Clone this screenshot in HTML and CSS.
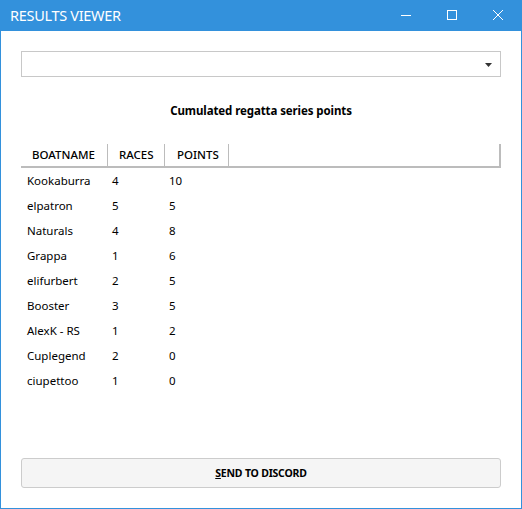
FILE: index.html
```html
<!DOCTYPE html>
<html>
<head>
<meta charset="utf-8">
<link rel="stylesheet" href="styles.css">
</head>
<body>
<div class="window">
  <div class="titlebar">
    <div class="title">RESULTS VIEWER</div>
    <div class="controls">
      <div class="ctl"><svg width="10" height="10" viewBox="0 0 10 10"><path d="M0 5.5H10" stroke="#fff" stroke-width="1"/></svg></div>
      <div class="ctl"><svg width="10" height="10" viewBox="0 0 10 10"><rect x="0.5" y="0.5" width="9" height="9" fill="none" stroke="#fff" stroke-width="1"/></svg></div>
      <div class="ctl"><svg width="10" height="10" viewBox="0 0 10 10"><path d="M0 0L10 10M10 0L0 10" stroke="#fff" stroke-width="1"/></svg></div>
    </div>
  </div>
  <div class="content">
    <div class="combo"><svg class="arrow" width="7" height="4" viewBox="0 0 7 4"><path d="M0 0H7L3.5 4Z" fill="#333"/></svg></div>
    <div class="heading">Cumulated regatta series points</div>
    <div class="grid">
      <div class="ghead">
        <div class="hc c1">BOATNAME</div>
        <div class="hc c2">RACES</div>
        <div class="hc c3">POINTS</div>
        <div class="hc rest"></div>
      </div>
      <div class="row"><div class="c1">Kookaburra</div><div class="c2">4</div><div class="c3">10</div></div>
      <div class="row"><div class="c1">elpatron</div><div class="c2">5</div><div class="c3">5</div></div>
      <div class="row"><div class="c1">Naturals</div><div class="c2">4</div><div class="c3">8</div></div>
      <div class="row"><div class="c1">Grappa</div><div class="c2">1</div><div class="c3">6</div></div>
      <div class="row"><div class="c1">elifurbert</div><div class="c2">2</div><div class="c3">5</div></div>
      <div class="row"><div class="c1">Booster</div><div class="c2">3</div><div class="c3">5</div></div>
      <div class="row"><div class="c1">AlexK - RS</div><div class="c2">1</div><div class="c3">2</div></div>
      <div class="row"><div class="c1">Cuplegend</div><div class="c2">2</div><div class="c3">0</div></div>
      <div class="row"><div class="c1">ciupettoo</div><div class="c2">1</div><div class="c3">0</div></div>
    </div>
    <div class="button"><span class="u">S</span>END TO DISCORD</div>
  </div>
</div>
</body>
</html>
```
FILE: styles.css
```css
html, body {
  margin: 0;
  padding: 0;
  background: #fff;
}
body {
  font-family: "Noto Sans", "Open Sans", sans-serif;
  color: #000;
}
.window {
  width: 522px;
  height: 509px;
  box-sizing: border-box;
  border: 1px solid #3391dc;
  border-top: none;
  display: flex;
  flex-direction: column;
}
.titlebar {
  height: 31px;
  margin: 0 -1px;
  background: #3391dc;
  display: flex;
  align-items: center;
  justify-content: space-between;
}
.title {
  color: #fff;
  font-size: 14.5px;
  padding-left: 10px;
  padding-bottom: 1px;
  letter-spacing: -0.3px;
}
.controls {
  display: flex;
  align-self: stretch;
  padding-right: 1px;
}
.ctl {
  width: 46px;
  display: flex;
  align-items: center;
  justify-content: center;
  padding-bottom: 1px;
}
.ctl svg { display: block; }
.content {
  flex: 1;
  display: flex;
  flex-direction: column;
  padding: 20px;
}
.combo {
  height: 26px;
  box-sizing: border-box;
  border: 1px solid #c8c8c8;
  display: flex;
  align-items: center;
  justify-content: flex-end;
  padding-right: 8px;
}
.combo .arrow { display: block; margin-top: 1px; }
.heading {
  text-align: center;
  font-weight: bold;
  font-size: 11.5px;
  letter-spacing: -0.1px;
  margin-top: 25px;
  height: 18px;
  line-height: 18px;
}
.grid {
  flex: 1;
  margin-top: 24px;
  width: 480px;
  font-size: 11.5px;
}
.ghead {
  display: flex;
  height: 22px;
  border-bottom: 2px solid #bcbcbc;
}
.hc {
  box-sizing: border-box;
  border-right: 1px solid #bcbcbc;
  padding-left: 11px;
  line-height: 21px;
  font-weight: 500;
}
.ghead .c1 { width: 87px; }
.ghead .c2 { width: 57px; }
.ghead .c3 { width: 64px; padding-left: 12px; }
.ghead .rest { flex: 1; border-right: 2px solid #bcbcbc; }
.row {
  display: flex;
  height: 25px;
  line-height: 25px;
}
.row:first-of-type { margin-top: 1px; }
.row > div { box-sizing: border-box; padding-left: 5px; }
.row .c1 { width: 86px; padding-left: 6px; }
.row .c2 { width: 57px; }
.button {
  height: 30px;
  box-sizing: border-box;
  border: 1px solid #cccccc;
  border-radius: 3px;
  background: #f5f5f5;
  display: flex;
  align-items: center;
  justify-content: center;
  font-size: 10.5px;
  letter-spacing: -0.2px;
  font-weight: bold;
}
.u { text-decoration: underline; }
```
